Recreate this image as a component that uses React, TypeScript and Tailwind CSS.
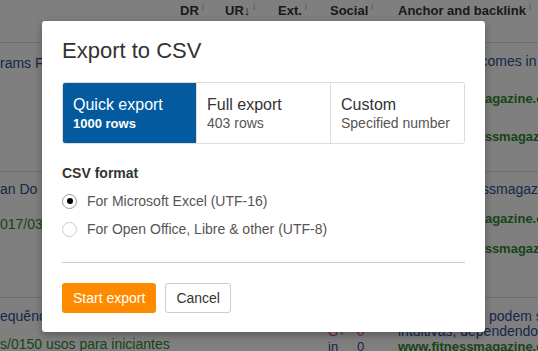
import { useState } from 'react'

type Tab = { key: string; title: string; sub: string }

const tabs: Tab[] = [
  { key: 'quick', title: 'Quick export', sub: '1000 rows' },
  { key: 'full', title: 'Full export', sub: '403 rows' },
  { key: 'custom', title: 'Custom', sub: 'Specified number' },
]

const formats = [
  { key: 'utf16', label: 'For Microsoft Excel (UTF-16)' },
  { key: 'utf8', label: 'For Open Office, Libre & other (UTF-8)' },
]

function HeadCell({ label, className }: { label: string; className: string }) {
  return (
    <div className={`flex items-start font-bold text-[13px] text-[#333] ${className}`}>
      <span className="leading-[18px]">{label}</span>
      <span className="ml-[3px] text-[9px] leading-[10px] font-normal text-[#aaa]">i</span>
    </div>
  )
}

// the backlinks table sitting behind the dialog
function BacklinksTable() {
  return (
    <div className="text-[14px] text-[#2d4f8f]">
      <div className="flex h-[43px] pt-[2px] border-b border-[#ddd]">
        <div className="w-[180px]" />
        <HeadCell label="DR" className="w-[45px]" />
        <HeadCell label="UR↓" className="w-[53px]" />
        <HeadCell label="Ext." className="w-[52px]" />
        <HeadCell label="Social" className="w-[68px]" />
        <HeadCell label="Anchor and backlink" className="flex-1 whitespace-nowrap" />
      </div>

      <div className="flex h-[129px] border-b border-[#ddd] whitespace-nowrap">
        <div className="w-[398px] overflow-hidden">
          <div className="mt-[11px] leading-[18px]">rams For Beginners</div>
        </div>
        <div className="flex-1 overflow-hidden leading-[18px]">
          <div className="mt-[9px]">Exercise is it comes in handy</div>
          <div className="mt-[20px] text-[13px] font-bold text-[#2e8b2e]">www.fitnessmagazine.com.br</div>
          <div className="mt-[20px] text-[13px] font-bold text-[#2e8b2e]">https://br.fitnessmagazine.com.br</div>
        </div>
      </div>

      <div className="flex h-[126px] border-b border-[#ddd] whitespace-nowrap">
        <div className="w-[398px] overflow-hidden leading-[18px]">
          <div className="mt-[8px]">an Do Zero</div>
          <div className="mt-[17px] text-[#2e8b2e]">017/03/treino-em-casa</div>
        </div>
        <div className="flex-1 overflow-hidden leading-[18px]">
          <div className="mt-[8px]">https://br.fitnessmagazine.com.br</div>
          <div className="mt-[12px] text-[13px] font-bold text-[#2e8b2e]">www.fitnessmagazine.com.br</div>
          <div className="mt-[12px] text-[13px] font-bold text-[#2e8b2e]">https://br.fitnessmagazine.com.br</div>
        </div>
      </div>

      <div className="flex whitespace-nowrap">
        <div className="w-[328px] overflow-hidden leading-[18px]">
          <div className="mt-[9px]">equência de treino</div>
          <div className="mt-[10px] text-[#2e8b2e]">s/0150 usos para iniciantes</div>
        </div>
        <div className="w-[70px] text-[13px] leading-[15px] mt-[26px]">
          <div className="flex">
            <span className="w-[29px] text-[#d9483b]">G+</span>
            <span className="text-[#d9483b]">0</span>
          </div>
          <div className="flex">
            <span className="w-[29px]">in</span>
            <span>0</span>
          </div>
        </div>
        <div className="flex-1 overflow-hidden leading-[15px]">
          <div className="mt-[11px]">Os aplicativos podem ser</div>
          <div>intuitivas, dependendo do nível</div>
          <div className="text-[13px] font-bold text-[#2e8b2e]">www.fitnessmagazine.com.br</div>
        </div>
      </div>
    </div>
  )
}

export default function App() {
  const [tab, setTab] = useState('quick')
  const [format, setFormat] = useState('utf16')

  return (
    <div className="relative w-[538px] h-[351px] overflow-hidden bg-white font-['Liberation_Sans',Arial,sans-serif]">
      <BacklinksTable />

      <div className="absolute inset-0 bg-black/50" />

      <div className="absolute left-[42px] top-[21px] w-[443px] rounded-[3px] bg-white px-[20px] pt-[18px] pb-[19px] shadow-[0_3px_9px_rgba(0,0,0,0.3)]">
        <h3 className="text-[22px] leading-[1.1] text-[#333] mb-[19px]">Export to CSV</h3>

        <div className="flex h-[62px] rounded-[3px] border border-[#ddd] overflow-hidden">
          {tabs.map((t, i) => {
            const active = tab === t.key
            return (
              <button
                key={t.key}
                onClick={() => setTab(t.key)}
                className={`flex-1 flex flex-col justify-center pl-[10px] text-left ${
                  i > 0 ? 'border-l border-[#ddd]' : ''
                } ${active ? 'bg-[#035a9e] text-white' : 'bg-white text-[#333]'}`}
              >
                <span className="text-[16px] leading-[20px]">{t.title}</span>
                {active ? (
                  <span className="text-[13px] leading-[17px] font-bold">{t.sub}</span>
                ) : (
                  <span className="text-[14px] leading-[17px] text-[#555]">{t.sub}</span>
                )}
              </button>
            )
          })}
        </div>

        <div className="mt-[21px] text-[14px] leading-[17px] font-bold text-[#333]">CSV format</div>
        <div className="mt-[5px]">
          {formats.map((f) => {
            const checked = format === f.key
            return (
              <label key={f.key} className="flex h-[28px] items-center gap-[10px] cursor-pointer" onClick={() => setFormat(f.key)}>
                <span
                  className={`flex w-[15px] h-[15px] items-center justify-center rounded-full border ${
                    checked ? 'border-[#999]' : 'border-[#ccc]'
                  }`}
                >
                  {checked && <span className="w-[6px] h-[6px] rounded-full bg-black" />}
                </span>
                <span className="text-[14px] text-[#555]">{f.label}</span>
              </label>
            )
          })}
        </div>

        <div className="mt-[19px] border-t border-[#ccc]" />

        <div className="mt-[20px] flex gap-[9px]">
          <button className="h-[30px] rounded-[3px] bg-[#ff8a00] px-[11px] text-[14px] text-white">Start export</button>
          <button className="h-[30px] rounded-[3px] border border-[#ccc] bg-white px-[10px] text-[14px] text-[#333]">Cancel</button>
        </div>
      </div>
    </div>
  )
}
